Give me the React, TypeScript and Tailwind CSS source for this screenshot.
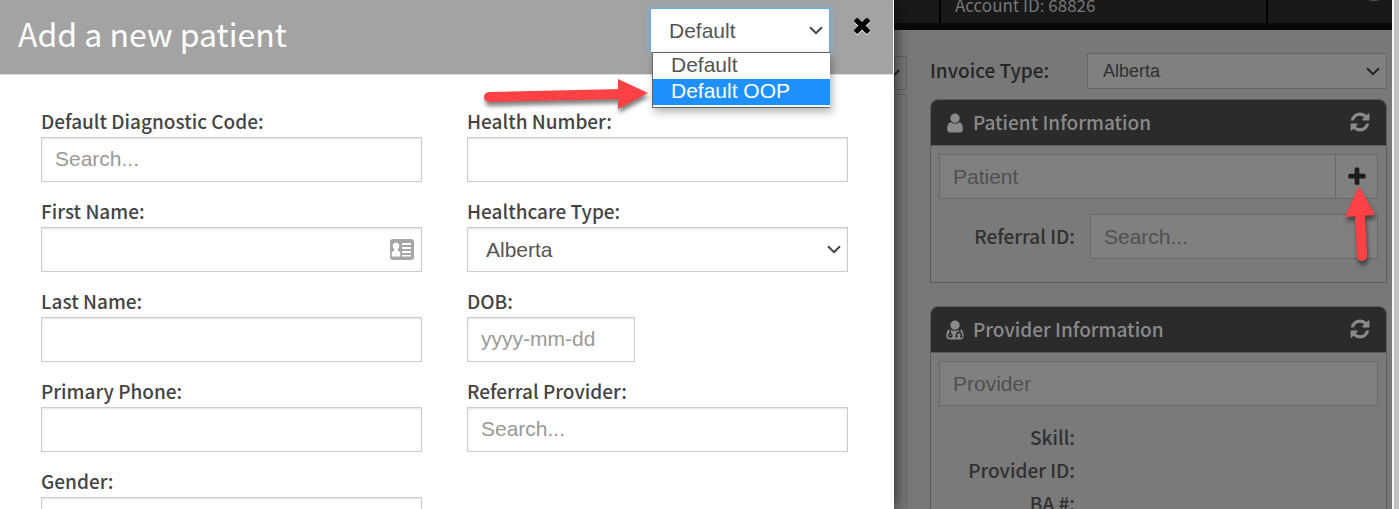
import type { ReactNode } from 'react'
import { clsx } from 'clsx'

const icons = {
  user: 'M1536 1399q0 109-62.5 187t-150.5 78h-854q-88 0-150.5-78t-62.5-187q0-85 8.5-160.5t31.5-152 58.5-131 94-89 134.5-34.5q131 128 313 128t313-128q76 0 134.5 34.5t94 89 58.5 131 31.5 152 8.5 160.5zM1280 512q0 159-112.5 271.5t-271.5 112.5-271.5-112.5-112.5-271.5 112.5-271.5 271.5-112.5 271.5 112.5 112.5 271.5z',
  doctor:
    'M576 1344q0 26-19 45t-45 19-45-19-19-45 19-45 45-19 45 19 19 45zM1600 1405q0 121-73 190t-194 69h-874q-121 0-194-69t-73-190q0-68 5.5-131t24-138 47.5-132.5 81-103 120-60.5q-22 52-22 120v203q-58 20-93 70t-35 111q0 80 56 136t136 56 136-56 56-136q0-61-35.5-111t-92.5-70v-203q0-62 25-93 132 104 295 104t295-104q25 31 25 93v64q-106 0-181 75t-75 181v89q-32 29-32 71 0 40 28 68t68 28 68-28 28-68q0-42-32-71v-89q0-52 38-90t90-38 90 38 38 90v89q-32 29-32 71 0 40 28 68t68 28 68-28 28-68q0-42-32-71v-89q0-68-34.5-127.5t-93.5-93.5q0-10 .5-42.5t0-48-2.5-41.5-7-47-13-40q68 15 120 60.5t81 103 47.5 132.5 24 138 5.5 131zM1280 512q0 159-112.5 271.5t-271.5 112.5-271.5-112.5-112.5-271.5 112.5-271.5 271.5-112.5 271.5 112.5 112.5 271.5z',
  refresh:
    'M1639 1056q0 5-1 7-64 268-268 434.5t-478 166.5q-146 0-282.5-55t-243.5-157l-129 129q-19 19-45 19t-45-19-19-45v-448q0-26 19-45t45-19h448q26 0 45 19t19 45-19 45l-137 137q71 66 161 102t187 36q134 0 250-65t186-179q11-17 53-117 8-23 30-23h192q13 0 22.5 9.5t9.5 22.5zm25-800v448q0 26-19 45t-45 19h-448q-26 0-45-19t-19-45 19-45l138-138q-148-137-349-137-134 0-250 65t-186 179q-11 17-53 117-8 23-30 23h-199q-13 0-22.5-9.5t-9.5-22.5v-7q65-268 270-434.5t480-166.5q146 0 284 55.5t245 156.5l130-129q19-19 45-19t45 19 19 45z',
  times:
    'M1490 1322q0 40-28 68l-136 136q-28 28-68 28t-68-28l-294-294-294 294q-28 28-68 28t-68-28l-136-136q-28-28-28-68t28-68l294-294-294-294q-28-28-28-68t28-68l136-136q28-28 68-28t68 28l294 294 294-294q28-28 68-28t68 28l136 136q28 28 28 68t-28 68l-294 294 294 294q28 28 28 68z',
  plus: 'M1600 736v192q0 40-28 68t-68 28h-416v416q0 40-28 68t-68 28h-192q-40 0-68-28t-28-68v-416h-416q-40 0-68-28t-28-68v-192q0-40 28-68t68-28h416v-416q0-40 28-68t68-28h192q40 0 68 28t28 68v416h416q40 0 68 28t28 68z',
}

function Icon({ name, className }: { name: keyof typeof icons; className?: string }) {
  return (
    <svg viewBox="0 0 1792 1792" fill="currentColor" aria-hidden="true" className={className}>
      <path d={icons[name]} />
    </svg>
  )
}

function Chevron({ className }: { className?: string }) {
  return (
    <svg viewBox="0 0 14 9" fill="none" stroke="currentColor" strokeWidth="2" aria-hidden="true" className={clsx('pointer-events-none absolute h-[9px] w-[14px]', className)}>
      <path d="M1 1.2 7 7.2 13 1.2" />
    </svg>
  )
}

const controlClass =
  'block h-[45px] w-full border border-[#ccc] bg-white font-[Liberation_Sans,Arial,sans-serif] text-[21px] text-[#555] shadow-[inset_0_1px_2px_rgba(0,0,0,0.12)] outline-none placeholder:text-[#999]'

const inputClass = clsx(controlClass, 'px-[13px] pb-[2px]')

const dimInputClass =
  'block h-[45px] w-full min-w-0 border border-[#686868] bg-[#808080] px-[13px] font-[Liberation_Sans,Arial,sans-serif] text-[21px] text-[#333] outline-none placeholder:text-[#505050]'

function Field({ id, label, children }: { id: string; label: string; children: ReactNode }) {
  return (
    <div>
      <label htmlFor={id} className="block pb-[2px] text-[19px] leading-[28px] font-medium text-[#444]">
        {label}
      </label>
      {children}
    </div>
  )
}

function Panel({ title, icon, children }: { title: string; icon: 'user' | 'doctor'; children: ReactNode }) {
  return (
    <section className="rounded-t-lg border border-[#5c5c5c] bg-[#7a7a7a]">
      <header className="flex h-[46px] items-center rounded-t-[7px] border-b border-[#5c5c5c] bg-[#2b2b2b] pr-[15px] pl-[13px] text-[#8a8a8a]">
        <Icon name={icon} className="h-[22px] w-[22px]" />
        <h2 className="ml-[7px] flex-1 pb-[2px] text-[19px] leading-[28px] font-medium">{title}</h2>
        <button type="button" aria-label="Refresh" className="pb-[2px]">
          <Icon name="refresh" className="h-[22px] w-[22px]" />
        </button>
      </header>
      {children}
    </section>
  )
}

function PatientModal() {
  return (
    <div role="dialog" aria-labelledby="modal-title" className="relative z-10 min-w-0 flex-1 border-r border-white bg-white shadow-[2px_0_14px_rgba(0,0,0,0.6)]">
      <header className="flex h-[75px] items-start border-b border-[#e0e0e0] bg-[#a3a3a3] pr-[19px] pl-[18px]">
        <h1 id="modal-title" className="flex-1 text-[32px] leading-[66px] text-white">
          Add a new patient
        </h1>
        <div className="relative mt-2 w-[180px]">
          <select
            aria-label="Template"
            defaultValue="Default"
            className="block h-[45px] w-full appearance-none border border-[#66afe9] bg-white px-[18px] font-[Liberation_Sans,Arial,sans-serif] text-[21px] text-[#555] shadow-[0_0_8px_rgba(102,175,233,0.6)] outline-none"
          >
            <option>Default</option>
            <option>Default OOP</option>
          </select>
          <Chevron className="top-[18px] right-[7px] text-[#444]" />
          <ul role="listbox" aria-label="Templates" className="absolute top-11 right-0 left-[2px] h-14 border border-r-0 border-[#666] bg-white font-[Liberation_Sans,Arial,sans-serif] text-[21px] leading-6 text-[#555] shadow-[2px_4px_8px_rgba(0,0,0,0.3)]">
            <li role="option" aria-selected="false" className="pb-[2px] pl-[18px]">Default</li>
            <li role="option" aria-selected="true" className="bg-[#1e90ff] pb-[2px] pl-[18px] text-white">Default OOP</li>
          </ul>
          <svg viewBox="0 0 170 40" aria-hidden="true" className="absolute top-[66px] right-full h-10 w-[170px] drop-shadow-[1px_4px_2px_rgba(0,0,0,0.5)]">
            <path d="M9 23 142 20" stroke="#fd4145" strokeWidth="10" strokeLinecap="round" />
            <path d="M138 5 168 19 138 35z" fill="#fd4145" />
          </svg>
        </div>
        <button type="button" aria-label="Close" className="mt-[13px] ml-5 text-black">
          <Icon name="times" className="h-6 w-6 drop-shadow-[0_1px_0_#fff]" />
        </button>
      </header>

      <form className="grid grid-cols-2 gap-x-[45px] gap-y-[15px] pt-8 pr-[45px] pl-[41px]">
        <Field id="diagnostic" label="Default Diagnostic Code:">
          <input id="diagnostic" placeholder="Search..." className={inputClass} />
        </Field>
        <Field id="health-number" label="Health Number:">
          <input id="health-number" className={inputClass} />
        </Field>
        <Field id="first-name" label="First Name:">
          <div className="relative">
            <input id="first-name" className={inputClass} />
            <svg viewBox="0 0 24 21" aria-hidden="true" className="absolute top-3 right-2 h-[21px] w-6">
              <rect width="24" height="21" rx="3" fill="#a6a6a6" />
              <path d="M6 3.500c2 0 3.200 1.300 3.200 3.300 0 1.500-.6 2.700-1.300 3.300v1.600l2.300 1.300V17.500H1.800V13l2.300-1.300v-1.600C3.400 9.500 2.800 8.300 2.800 6.800 2.800 4.800 4 3.500 6 3.500zM12 4h9v2h-9zM12 8h9v2h-9zM12 12h9v2h-9zM12 16h9v1.500h-9z" fill="#fff" />
            </svg>
          </div>
        </Field>
        <Field id="healthcare-type" label="Healthcare Type:">
          <div className="relative">
            <select id="healthcare-type" className={clsx(controlClass, 'appearance-none px-[18px]')}>
              <option>Alberta</option>
            </select>
            <Chevron className="top-[18px] right-[7px] text-[#444]" />
          </div>
        </Field>
        <Field id="last-name" label="Last Name:">
          <input id="last-name" className={inputClass} />
        </Field>
        <Field id="dob" label="DOB:">
          <div className="w-[168px]">
            <input id="dob" placeholder="yyyy-mm-dd" className={inputClass} />
          </div>
        </Field>
        <Field id="phone" label="Primary Phone:">
          <input id="phone" type="tel" className={inputClass} />
        </Field>
        <Field id="referral-provider" label="Referral Provider:">
          <input id="referral-provider" placeholder="Search..." className={inputClass} />
        </Field>
        <Field id="gender" label="Gender:">
          <input id="gender" className={inputClass} />
        </Field>
      </form>
    </div>
  )
}

function InvoicePage() {
  return (
    <div className="flex w-[498px] shrink-0 flex-col bg-[#787878]">
      <div className="flex h-[30px] shrink-0 border-b-[7px] border-[#090909] bg-[#191919] text-[17px] text-[#777]">
        <div className="w-[47px] border-r-2 border-black" />
        <div className="flex-1 border-r-2 border-black pl-[14px] leading-[10px]">Account ID: 68826</div>
        <div className="w-[124px] pl-[100px]">
          <svg viewBox="0 0 12 2" aria-hidden="true" className="h-[2px] w-3">
            <path d="M0 0h12q-6 2-12 0z" fill="#555" />
          </svg>
        </div>
      </div>

      <div className="flex flex-1">
        <div className="flex w-[13px] flex-col pt-[26px]">
          <div className="relative h-[34px] border border-[#646464]">
            <Chevron className="top-3 right-[6px] text-[#222]" />
          </div>
          <div className="mt-1 flex-1 border-t border-r border-[#6a6a6a]" />
        </div>

        <main className="ml-[23px] min-w-0 flex-1 pt-[23px] pr-[5px]">
          <div className="flex items-center">
            <label htmlFor="invoice-type" className="w-[157px] pb-[2px] text-[19px] leading-[28px] font-medium text-[#252525]">
              Invoice Type:
            </label>
            <div className="relative flex-1">
              <select
                id="invoice-type"
                className="block h-9 w-full appearance-none border border-[#656565] bg-[#808080] px-[15px] font-[Liberation_Sans,Arial,sans-serif] text-[18px] text-[#303030] outline-none"
              >
                <option>Alberta</option>
              </select>
              <Chevron className="top-[14px] right-[7px] text-[#222]" />
            </div>
          </div>

          <div className="mt-[10px] flex flex-col gap-[23px]">
            <Panel title="Patient Information" icon="user">
              <div className="p-2 pb-[23px]">
                <div className="flex">
                  <input aria-label="Patient" placeholder="Patient" className={dimInputClass} />
                  <div className="relative">
                    <button type="button" aria-label="Add patient" className="flex h-[45px] w-[42px] items-center justify-center rounded-r border border-l-0 border-[#686868] bg-[#808080] text-[#1c1c1c]">
                      <Icon name="plus" className="h-[22px] w-[22px]" />
                    </button>
                    <svg viewBox="0 0 40 84" aria-hidden="true" className="absolute top-8 left-1 z-10 h-[84px] w-10 drop-shadow-[1px_4px_2px_rgba(0,0,0,0.5)]">
                      <path d="M20 28 22 70" stroke="#fd4145" strokeWidth="10" strokeLinecap="round" />
                      <path d="M19 0 35 29 5 31z" fill="#fd4145" />
                    </svg>
                  </div>
                </div>
                <div className="mt-[15px] flex items-center">
                  <label htmlFor="referral-id" className="w-[151px] shrink-0 pr-[15px] pb-[2px] text-right text-[19px] leading-[28px] font-medium text-[#303030]">
                    Referral ID:
                  </label>
                  <input id="referral-id" placeholder="Search..." className={dimInputClass} />
                </div>
              </div>
            </Panel>

            <Panel title="Provider Information" icon="doctor">
              <div className="p-2">
                <input aria-label="Provider" placeholder="Provider" className={dimInputClass} />
                <dl className="mt-[14px] w-[136px] text-right text-[19px] leading-[33px] font-medium text-[#303030]">
                  <dt>Skill:</dt>
                  <dt>Provider ID:</dt>
                  <dt>BA #:</dt>
                </dl>
              </div>
            </Panel>
          </div>
        </main>
      </div>
    </div>
  )
}

export default function App() {
  return (
    <div className="flex h-screen overflow-hidden font-[Noto_Sans_CJK_SC,sans-serif]">
      <PatientModal />
      <InvoicePage />
      <div className="w-[7px] shrink-0 border-l-2 border-[#f4f4f4] bg-[#c0c0c0]" />
    </div>
  )
}
